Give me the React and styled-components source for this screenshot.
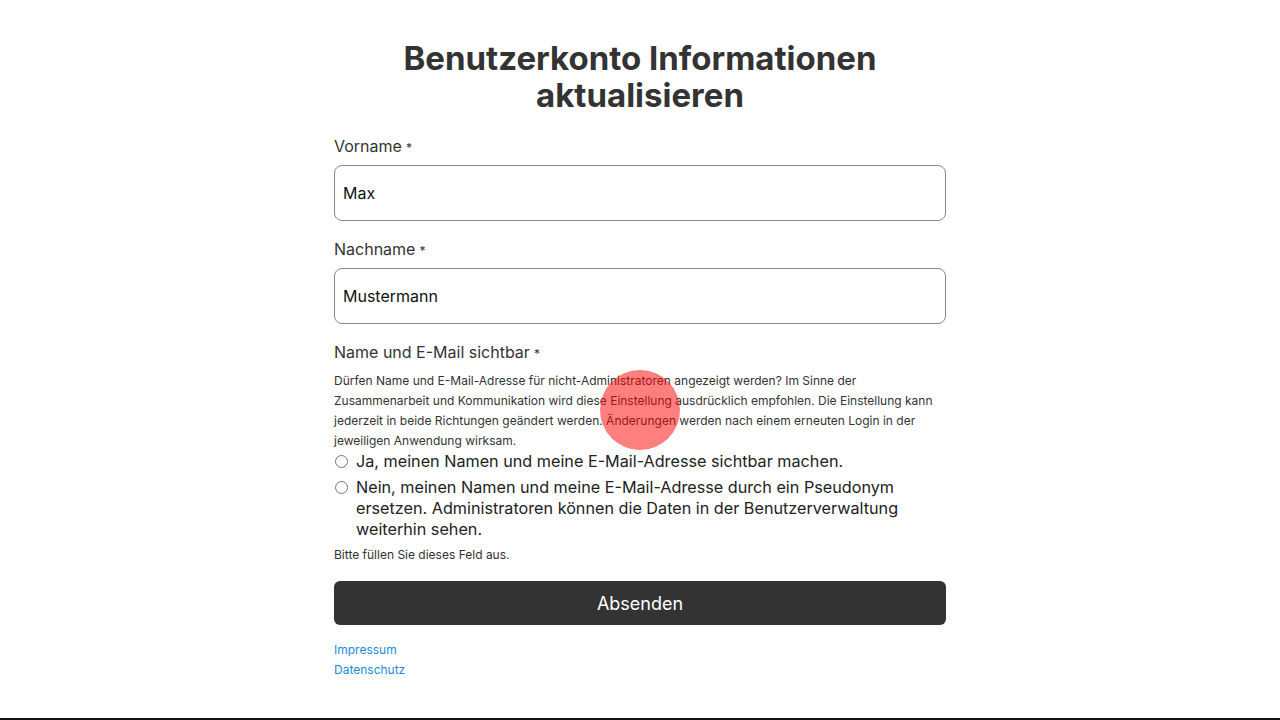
import React from "react";
import styled, { createGlobalStyle } from "styled-components";

const GlobalStyle = createGlobalStyle`
  html, body {
    margin: 0;
    padding: 0;
    background: #fff;
    font-family: Inter, "Noto Sans", sans-serif;
    color: #333;
  }
  * {
    box-sizing: border-box;
  }
`;

const Page = styled.div`
  position: relative;
  min-height: 718px;
  display: flex;
  flex-direction: column;
  align-items: center;
`;

const Form = styled.form`
  width: 612px;
  padding-top: 40px;
  display: flex;
  flex-direction: column;
`;

const Title = styled.h1`
  margin: 0 0 21px;
  font-size: 33px;
  line-height: 37px;
  font-weight: 700;
  text-align: center;
  color: #333;
`;

const Field = styled.div`
  display: flex;
  flex-direction: column;
  margin-bottom: ${(p) => p.$gap ?? 17}px;
`;

const Label = styled.label`
  font-size: 16px;
  line-height: 22px;
  color: #333;
  margin-bottom: 6px;

  span {
    font-size: 12px;
    margin-left: 4px;
  }
`;

const Input = styled.input`
  height: 56px;
  width: 100%;
  border: 1px solid #888;
  border-radius: 8px;
  padding: 0 8px;
  font-family: inherit;
  font-size: 16px;
  color: #111;
  background: #fff;
  outline: none;
`;

const Hint = styled.p`
  margin: 0;
  font-size: 12px;
  line-height: 20px;
  color: #333;
`;

const RadioRow = styled.label`
  display: flex;
  align-items: flex-start;
  gap: 8px;
  font-size: 16.2px;
  line-height: 21px;
  color: #222;
  margin-top: ${(p) => p.$top || 0}px;

  input {
    margin: 4px 0 0 1px;
    width: 13px;
    height: 13px;
    flex: none;
  }
`;

const ErrorText = styled.p`
  margin: 6px 0 17px;
  font-size: 12px;
  line-height: 18px;
  color: #333;
`;

const Submit = styled.button`
  height: 44px;
  width: 100%;
  border: none;
  border-radius: 6px;
  background: #333;
  color: #fff;
  font-family: inherit;
  font-size: 18px;
`;

const Links = styled.div`
  display: flex;
  flex-direction: column;
  margin-top: 15px;
`;

const FooterLink = styled.a`
  font-size: 12px;
  line-height: 20px;
  color: #1a8cd8;
  text-decoration: none;
`;

const Footer = styled.footer`
  height: 2px;
  background: #111;
`;

const TouchDot = styled.div`
  position: absolute;
  left: 600px;
  top: 370px;
  width: 80px;
  height: 80px;
  border-radius: 50%;
  background: rgba(255, 0, 0, 0.5);
  pointer-events: none;
`;

export default function App() {
  return (
    <>
      <GlobalStyle />
      <Page>
        <Form onSubmit={(e) => e.preventDefault()}>
          <Title>
            Benutzerkonto Informationen
            <br />
            aktualisieren
          </Title>
          <Field>
            <Label>
              Vorname<span>*</span>
            </Label>
            <Input defaultValue="Max" />
          </Field>
          <Field>
            <Label>
              Nachname<span>*</span>
            </Label>
            <Input defaultValue="Mustermann" />
          </Field>
          <Field $gap={0}>
            <Label>
              Name und E-Mail sichtbar<span>*</span>
            </Label>
            <Hint>
              Dürfen Name und E-Mail-Adresse für nicht-Administratoren angezeigt
              werden? Im Sinne der Zusammenarbeit und Kommunikation wird diese
              Einstellung ausdrücklich empfohlen. Die Einstellung kann jederzeit
              in beide Richtungen geändert werden. Änderungen werden nach einem
              erneuten Login in der jeweiligen Anwendung wirksam.
            </Hint>
            <RadioRow>
              <input type="radio" name="visible" />
              Ja, meinen Namen und meine E-Mail-Adresse sichtbar machen.
            </RadioRow>
            <RadioRow $top={5}>
              <input type="radio" name="visible" />
              Nein, meinen Namen und meine E-Mail-Adresse durch ein Pseudonym
              ersetzen. Administratoren können die Daten in der
              Benutzerverwaltung weiterhin sehen.
            </RadioRow>
            <ErrorText>Bitte füllen Sie dieses Feld aus.</ErrorText>
          </Field>
          <Submit type="submit">Absenden</Submit>
          <Links>
            <FooterLink href="#">Impressum</FooterLink>
            <FooterLink href="#">Datenschutz</FooterLink>
          </Links>
        </Form>
        <TouchDot />
      </Page>
      <Footer />
    </>
  );
}
